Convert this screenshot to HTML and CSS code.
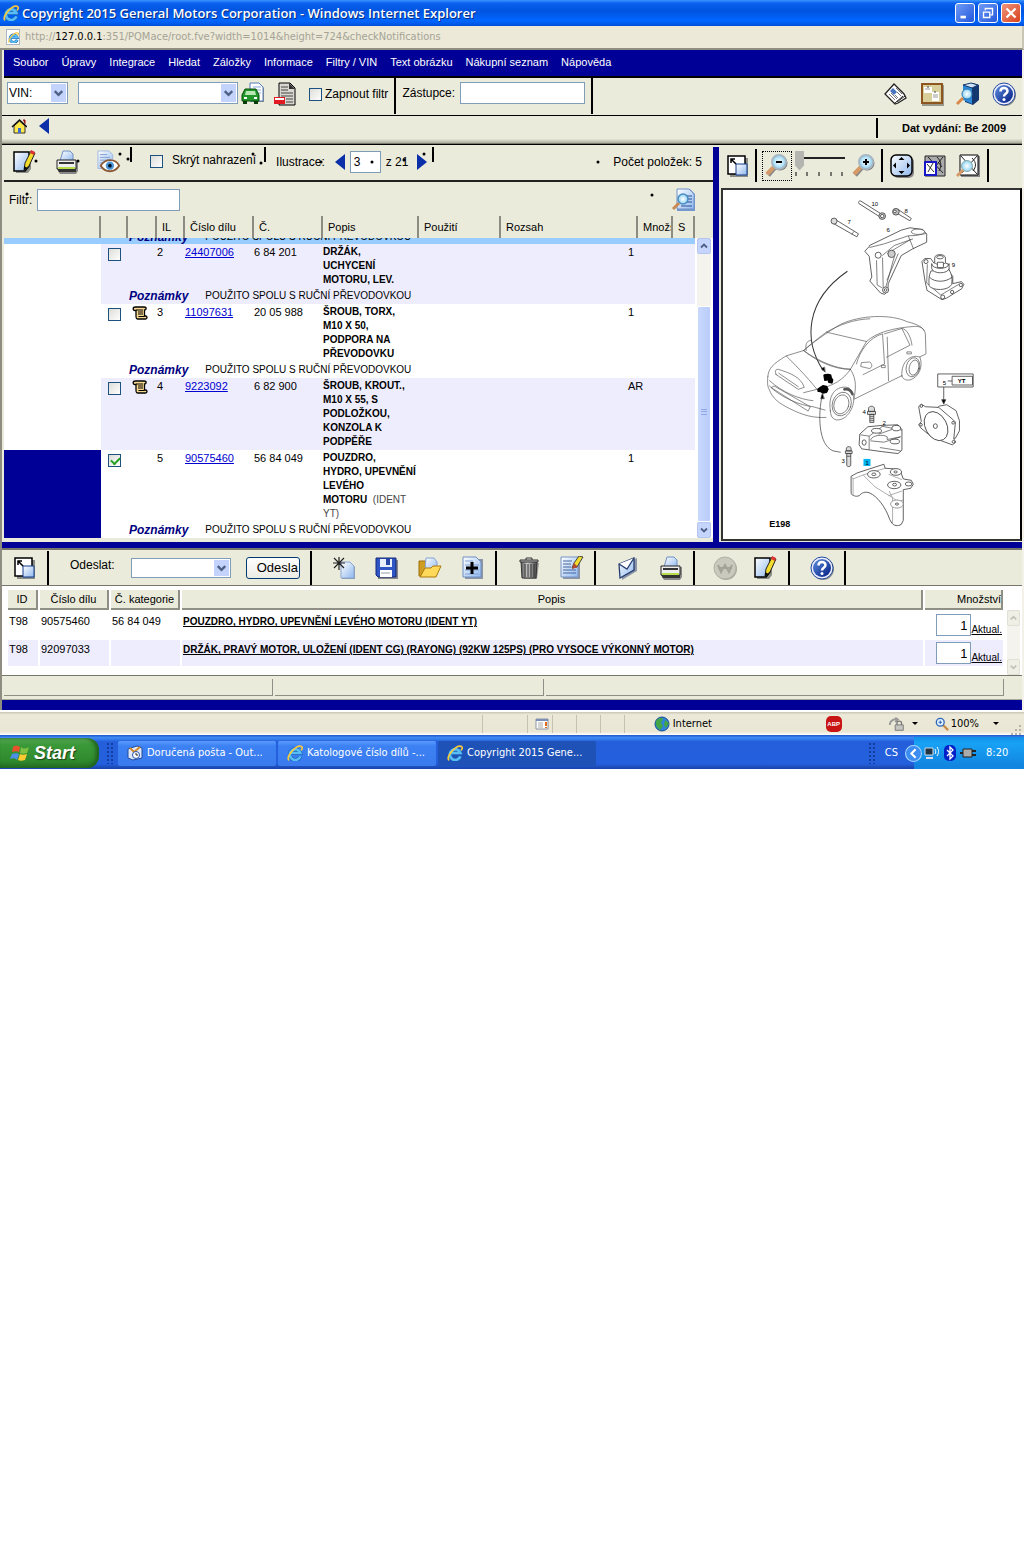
FILE: index.html
```html
<!DOCTYPE html>
<html lang="cs">
<head>
<meta charset="utf-8">
<title>Copyright 2015 General Motors Corporation - Windows Internet Explorer</title>
<link rel="stylesheet" href="styles.css">
</head>
<body>
<svg class="sprite" aria-hidden="true">
  <defs>
    <linearGradient id="sky" x1="0" y1="0" x2="1" y2="1"><stop offset="0" stop-color="#fff"/><stop offset="1" stop-color="#8fb8ee"/></linearGradient>
    <radialGradient id="lens"><stop offset="0" stop-color="#fff"/><stop offset="1" stop-color="#8ed2f2"/></radialGradient>
    <linearGradient id="globe" x1="0" y1="0" x2="1" y2="1"><stop offset="0" stop-color="#5f8fe0"/><stop offset="1" stop-color="#001c80"/></linearGradient>
    <linearGradient id="metal"><stop offset="0" stop-color="#555"/><stop offset=".4" stop-color="#ccc"/><stop offset="1" stop-color="#444"/></linearGradient>
    <symbol id="ie" viewBox="0 0 24 24"><path d="M20 17a8 8 0 1 1 0-5H7" fill="none" stroke="#1d62b8" stroke-width="6"/><path d="M20 17a8 8 0 1 1 0-5H7" fill="none" stroke="#58bdf5" stroke-width="4"/><path d="M3 23C-2 18 13 0 21 2c3 1 2 4 0 6" fill="none" stroke="#f7c93e" stroke-width="2.500"/></symbol>
    <symbol id="car" viewBox="0 0 24 24"><path d="M10 2h9l4 4v14H10z" fill="#8b8d88"/><path d="M9 1h9l4 4v14H9z" fill="#fff" stroke="#557db5"/><path d="M12 5h8M12 8h8M12 11h8" stroke="#88a9d8"/><path d="M4 7h11l3 6v6H1v-6z" fill="#22962a" stroke="#064d0a"/><path d="M5 9h9l1 4H4z" fill="#b8e7b4"/><path d="M2 19h4v3H2zM13 19h4v3h-4z" fill="#073b08"/><path d="M3 16h3M13 16h3" stroke="#fff" stroke-width="2"/></symbol>
    <symbol id="reddoc" viewBox="0 0 24 24"><path d="M6 1h11l5 5v17H6z" fill="#d8d8d0" stroke="#000"/><path d="M16 1v6h6z" fill="#333"/><path d="M8 5h7M8 8h7M8 11h12M8 14h12M13 17h7M13 20h7" stroke="#444"/><path d="M1 15h11v7H1z" fill="#e31b23"/><path d="M2 16h9v2H2z" fill="#fff"/></symbol>
    <symbol id="news" viewBox="0 0 24 24"><path d="M10 2 1 12l10 10 3-1 8-5-2-4z" fill="#fff" stroke="#222" stroke-width="1.300"/><path d="m13 20 8-6M11 21l8-7" fill="none" stroke="#222"/><path d="m9 6 4 4-3 3-4-4z" fill="#4773be"/><path d="m5 12 6 6M7 11l6 6M11 13l3 3M12 6l6 6M13 10l4 4" stroke="#777"/></symbol>
    <symbol id="board" viewBox="0 0 24 24"><path d="M2 3h22v21H2z" fill="#9a978b"/><path d="M2 2h20v19H2z" fill="#d8cf9a" stroke="#8d5520" stroke-width="2"/><path d="M4 5h8v6H4zM12 10h7v9h-7z" fill="#fff"/><path d="M5 7h5M13 13h5M13 15h5" stroke="#999"/><path d="M8 4v2M15 9v2" stroke="#444"/></symbol>
    <symbol id="book" viewBox="0 0 24 24"><path d="m9 4 8-3 6 2v15l-6 5-8-3z" fill="#12386f"/><path d="m7 3 9 3v16l-9-4z" fill="#2e8ad4"/><path d="m7 3 8-2 7 2-6 3z" fill="#cfe3f5" stroke="#12386f"/><circle cx="11" cy="12" r="5" fill="url(#lens)" stroke="#2876b4"/><path d="m7 16-6 6" stroke="#d9884a" stroke-width="3"/></symbol>
    <symbol id="help" viewBox="0 0 24 24"><circle cx="13" cy="13" r="11" fill="#8b8d88"/><circle cx="12" cy="12" r="11" fill="#eef" stroke="#214a9c"/><circle cx="12" cy="12" r="9" fill="url(#globe)"/><path d="M8.500 9.500c0-5 7-4.500 7-.5 0 3-3.500 2.500-3.500 5.500" fill="none" stroke="#fff" stroke-width="2.500"/><circle cx="12" cy="17.500" r="1.500" fill="#fff"/></symbol>
    <symbol id="home" viewBox="0 0 16 16"><path d="M3 8v7h11V8L8.500 3z" fill="#ffe84a" stroke="#333"/><path d="M1 9l7.500-7L16 9" fill="none" stroke="#111" stroke-width="1.500"/><path d="M7 10h3v5H7z" fill="#3a6ad0"/><path d="M12 2h2v4" fill="#911" stroke="#911"/></symbol>
    <symbol id="left" viewBox="0 0 12 16"><path d="M11 0v16L1 8z" fill="#0a2fa8"/></symbol>
    <symbol id="right" viewBox="0 0 12 16"><path d="M1 0v16l10-8z" fill="#0a2fa8"/></symbol>
    <symbol id="edit" viewBox="0 0 24 24"><path d="M3 4h15v15l-3 4H3z" fill="#8b8d88"/><path d="M1 2h15v14l-4 5H1z" fill="url(#sky)" stroke="#000" stroke-width="1.500"/><path d="m11 20 1-7 6-12 4 2-6 13z" fill="#f2dc2c" stroke="#222"/><path d="m17 3 4 2 1-3-4-2z" fill="#d33"/><path d="m11 20 .5-4 2.500 2z" fill="#000"/></symbol>
    <symbol id="print" viewBox="0 0 24 24"><path d="M5 11 8 1h7l3 3v8z" fill="url(#sky)" stroke="#6f8fc2"/><path d="M3 11h20v10l-2 3H5l-2-3z" fill="#888"/><path d="M2 10h19v9H2z" fill="#eee" stroke="#222"/><path d="M4 12h15v2H4z" fill="#333"/><path d="M3 17h17v2H3z" fill="#b7dc4c"/><path d="M2 19h19v3H4z" fill="#333"/></symbol>
    <symbol id="eye" viewBox="0 0 26 24"><path d="M1 0h12l4 4v15H1z" fill="url(#sky)" stroke="#9cb5df"/><path d="M3 4h8M3 7h11M3 10h11M3 13h6" stroke="#7d9bd0"/><path d="M4 16c5-8 16-8 20 0-5 8-15 8-20 0z" fill="#fff" stroke="#8a5a35" stroke-width="2"/><circle cx="14" cy="16" r="4.500" fill="#4d95d7"/><circle cx="14" cy="16" r="2" fill="#012"/></symbol>
    <symbol id="finddoc" viewBox="0 0 24 24"><path d="M5 1h13l5 5v17H5z" fill="#7698ce"/><path d="M5 1h12l5 5v15H5z" fill="url(#sky)" stroke="#6e90c9"/><path d="M15 8h5M15 11h5M15 14h5M9 18h11" stroke="#264e96"/><circle cx="11" cy="11" r="5" fill="url(#lens)" stroke="#4a8cc0" stroke-width="1.500"/><path d="m7 15-6 6" stroke="#c78954" stroke-width="3"/></symbol>
    <symbol id="scroll" viewBox="0 0 16 16"><path d="M3.500 2H12c3 0 2.500 3 .5 3v6h1c2 0 2 3 0 3H6c-2 0-2-1-2-3V5.500H3C.5 5.500.5 2 3.500 2z" fill="#f8d890" stroke="#000" stroke-width="1.300"/><path d="M4 5h7M6 7h5M6 9h5M6.500 11.500h6" stroke="#000"/></symbol>
    <symbol id="expand" viewBox="0 0 24 24"><path d="M4 4h18v19H4z" fill="#8b8d88"/><path d="M2 2h17v18H2z" fill="#fff" stroke="#000" stroke-width="1.500"/><path d="M10 10h11v11H10z" fill="url(#sky)" stroke="#123a8c"/><path d="M5 9V5h4M5 5l5 5" fill="none" stroke="#000" stroke-width="1.500"/></symbol>
    <symbol id="zoomout" viewBox="0 0 24 24"><path d="m10 13-7 8" stroke="#888" stroke-width="5"/><path d="m10 12-8 8" stroke="#d69a68" stroke-width="4"/><circle cx="15" cy="9" r="7.500" fill="#777"/><circle cx="14" cy="8" r="7" fill="url(#lens)" stroke="#a7b8c4" stroke-width="2"/><path d="M11 8h6" stroke="#000" stroke-width="2"/></symbol>
    <symbol id="zoomin" viewBox="0 0 24 24"><use href="#zoomout"/><path d="M14 5v6" stroke="#000" stroke-width="2"/></symbol>
    <symbol id="pan" viewBox="0 0 24 24"><rect x="3" y="3" width="21" height="21" rx="5" fill="#888"/><rect x="1" y="1" width="21" height="21" rx="5" fill="url(#sky)" stroke="#000" stroke-width="1.500"/><path d="m11.500 3 3 3h-6zM11.500 20l3-3h-6zM3 11.500l3-3v6zM20 11.500l-3-3v6z" fill="#000"/></symbol>
    <symbol id="region" viewBox="0 0 24 24"><path d="M2 2h20v20H2z" fill="#aaa" stroke="#222"/><path d="m5 3 15 16M20 3 8 18M14 3c4 4 5 8 2 14M15 8l4 5" stroke="#222" fill="none"/><path d="M2 8h11v13H2z" fill="#fff" stroke="#1717c8" stroke-width="2"/><path d="m4 10 7 8M10 9l-5 9" stroke="#333"/></symbol>
    <symbol id="whole" viewBox="0 0 24 24"><path d="M5 2h19v21H5z" fill="#888"/><path d="M4 1h18v20H4z" fill="#fff" stroke="#000"/><path d="m5 2 16 18M21 2 6 19M16 4c5 5 4 9 1 13" stroke="#222" fill="none"/><circle cx="11" cy="12" r="5.500" fill="url(#lens)" stroke="#8aa"/><path d="m7 16-6 6" stroke="#d69a68" stroke-width="3"/></symbol>
    <symbol id="newdoc" viewBox="0 0 24 24"><path d="M10 7h9l4 4v12H10z" fill="#909aa8"/><path d="M9 6h9l4 4v12H9z" fill="url(#sky)" stroke="#8aa6d4"/><path d="M7 1v13M1 7h12M2 2l10 10M12 2 2 12" stroke="#222" stroke-width="1.200"/></symbol>
    <symbol id="save" viewBox="0 0 24 24"><path d="M3 4h20v19H3z" fill="#888"/><path d="M1 2h20v19H3l-2-2z" fill="#2f55c4" stroke="#14297a"/><path d="M5 3h12v8H5z" fill="#e8effc"/><path d="M11 3h4v6h-4z" fill="#2746a8"/><path d="M5 14h12v7H5z" fill="#fff"/><path d="M6 17h9" stroke="#99a"/></symbol>
    <symbol id="folder" viewBox="0 0 24 24"><path d="M1 5h7l2 2h8v13H1z" fill="#cf9d22" stroke="#9d6f0b"/><path d="M8 2h8l3 4v9H7z" fill="url(#sky)" stroke="#84a2d3"/><path d="m2 21 5-9h6l2-2h8l-5 11z" fill="#ffd95a" stroke="#ab7b0d"/></symbol>
    <symbol id="adddoc" viewBox="0 0 24 24"><path d="M4 3h18v20H4z" fill="#8b95a5"/><path d="M2 1h13l5 5v15H2z" fill="url(#sky)" stroke="#6f8fc2"/><path d="M4 5h8M4 9h14M4 14h14M4 18h14" stroke="#83a0d2"/><path d="M11 6v12M5 12h12" stroke="#000" stroke-width="3"/></symbol>
    <symbol id="trash" viewBox="0 0 24 24"><path d="M6 7h16l-2 16H7z" fill="#999"/><path d="M4 5h16l-1 17H5z" fill="url(#metal)" stroke="#333"/><path d="M8 8v13M11 8v13M14 8v13M17 8v13" stroke="#333"/><path d="M3 4h18v2H3z" fill="#bbb" stroke="#333"/><path d="M9 4V2h6v2" fill="none" stroke="#333"/></symbol>
    <symbol id="erase" viewBox="0 0 24 24"><path d="M3 3h17v20H3z" fill="#8b95a5"/><path d="M1 1h17v20H1z" fill="url(#sky)" stroke="#7693c4"/><path d="M3 5h9M3 8h8M3 11h8M3 14h13M3 17h13" stroke="#45659f"/><path d="m12 12 2-5 5-7 4 1-6 10z" fill="#f0dc2c" stroke="#444"/><path d="m12 13 2-6 4 4z" fill="#b64733"/></symbol>
    <symbol id="mail" viewBox="0 0 24 24"><path d="m5 9 16-7v13L6 24z" fill="#8b95a5"/><path d="m3 8 15-6v12L4 22z" fill="url(#sky)" stroke="#263d70" stroke-width="1.300"/><path d="m3 8 8 5 7-11" fill="#fff" stroke="#263d70" stroke-width="1.300"/></symbol>
    <symbol id="world" viewBox="0 0 24 24"><circle cx="13" cy="13" r="11" fill="#a9a99e"/><circle cx="12" cy="12" r="11" fill="#c9c9bd" stroke="#b0b0a4"/><path d="m5 9 3 7 4-7 4 7 3-7M5 12h14" fill="none" stroke="#a3a397" stroke-width="2"/></symbol>
    <symbol id="chev" viewBox="0 0 16 16"><path d="m4 6 4 4 4-4" fill="none" stroke="#4d6185" stroke-width="2.500"/></symbol>
    <symbol id="chevup" viewBox="0 0 16 16"><path d="m4 10 4-4 4 4" fill="none" stroke="currentColor" stroke-width="2.500"/></symbol>
    <symbol id="earth" viewBox="0 0 16 16"><circle cx="8" cy="8" r="7" fill="#2d84d8" stroke="#1a4f95"/><path d="M2 5c3-4 6-3 7-2L7 7l2 3-3 4C3 12 1 8 2 5zM11 4l4 3-3 5-2-3z" fill="#43a548"/></symbol>
    <symbol id="flag" viewBox="0 0 20 20"><path d="M3 4c3-2 5-1 7 0L9 9C7 8 5 8 2 9z" fill="#e9502c"/><path d="M11 4c2 2 5 2 8 0l-2 6c-3 1-5 1-7 0z" fill="#7fc241"/><path d="M2 11c3-1 5-1 7 0l-2 6c-2-2-4-2-7-1z" fill="#4b8fe8"/><path d="M10 11c2 1 4 1 7 0l-2 6c-3 1-5 1-7 0z" fill="#fbcb2f"/></symbol>
    <symbol id="outlook" viewBox="0 0 16 16"><path d="m1 4 9-3 5 2v10l-9 2-5-2z" fill="#dfe9fb" stroke="#234a9a"/><path d="m3 3 4 4 6-5" fill="none" stroke="#d58b27" stroke-width="2"/><circle cx="9" cy="10" r="3.500" fill="#fff" stroke="#2450ad"/><path d="M9 8v2h2" fill="none" stroke="#222"/></symbol>
    <symbol id="glass" viewBox="0 0 16 16"><path d="m9 9 6 6" stroke="#c98b46" stroke-width="2.500"/><circle cx="6" cy="6" r="4.500" fill="#dff1ff" stroke="#2d66b5" stroke-width="1.500"/><path d="M6 4v4M4 6h4" stroke="#2058b0"/></symbol>
    <symbol id="lock" viewBox="0 0 20 16"><path d="M2 9c0-5 5-7 8-6M8 1l3 2-3 3" fill="none" stroke="#999" stroke-width="2"/><path d="M10 9V7c0-3 5-3 5 0v2" fill="none" stroke="#777" stroke-width="1.500"/><path d="M8 9h9v6H8z" fill="#c4c4c0" stroke="#777"/></symbol>
  </defs>
</svg>

<div class="window">
  <header class="titlebar">
    <svg class="i16"><use href="#ie"/></svg>
    <h1>Copyright 2015 General Motors Corporation - Windows Internet Explorer</h1>
    <button class="caption" aria-label="Minimalizovat"><svg viewBox="0 0 20 20"><path d="M5 14.500h6" stroke="#fff" stroke-width="3"/></svg></button>
    <button class="caption" aria-label="Obnovit"><svg viewBox="0 0 20 20"><path d="M7 7V5h8v7h-2M5 9h7v6H5z" fill="none" stroke="#fff" stroke-width="1.500"/></svg></button>
    <button class="caption close" aria-label="Zavřít"><svg viewBox="0 0 20 20"><path d="m5 5 10 10M15 5 5 15" stroke="#fff" stroke-width="2.500"/></svg></button>
  </header>
  <div class="address"><span class="page-icon"><svg><use href="#ie"/></svg></span><p>http://<b>127.0.0.1</b>:351/PQMace/root.fve?width=1014&amp;height=724&amp;checkNotifications</p></div>

  <div class="app">
    <nav class="menu">
      <a href="#">Soubor</a><a href="#">Úpravy</a><a href="#">Integrace</a><a href="#">Hledat</a><a href="#">Záložky</a><a href="#">Informace</a><a href="#">Filtry / VIN</a><a href="#">Text obrázku</a><a href="#">Nákupní seznam</a><a href="#">Nápověda</a>
    </nav>
    <div class="vinbar">
      <span class="combo vin-type"><select aria-label="Typ"><option>VIN:</option></select><svg><use href="#chev"/></svg></span>
      <span class="combo vin-value"><select aria-label="VIN"><option></option></select><svg><use href="#chev"/></svg></span>
      <button class="tool" aria-label="Vozidlo"><svg><use href="#car"/></svg></button>
      <button class="tool" aria-label="Zrušit vozidlo"><svg><use href="#reddoc"/></svg></button>
      <label class="check"><input type="checkbox"><span>Zapnout filtr</span></label>
      <i class="sep"></i>
      <label class="field"><span>Zástupce:</span><input type="text" class="deputy"></label>
      <i class="sep"></i>
      <div class="vin-tools">
        <button class="tool" aria-label="Novinky"><svg><use href="#news"/></svg></button>
        <button class="tool" aria-label="Nástěnka"><svg><use href="#board"/></svg></button>
        <button class="tool" aria-label="Katalog"><svg><use href="#book"/></svg></button>
        <button class="tool" aria-label="Nápověda"><svg><use href="#help"/></svg></button>
      </div>
    </div>
    <div class="crumbs">
      <button class="mini" aria-label="Domů"><svg class="i16"><use href="#home"/></svg></button>
      <button class="mini" aria-label="Zpět"><svg class="arrow"><use href="#left"/></svg></button>
      <p class="issue">Dat vydání: Be 2009</p>
    </div>

    <main class="split">
      <section class="parts">
        <svg class="dots" viewBox="0 0 693 70" aria-hidden="true"><g fill="#000"><circle cx="32" cy="14" r="1.500"/><circle cx="74" cy="14" r="1.500"/><circle cx="116" cy="7" r="1.500"/><circle cx="124" cy="12" r="1.500"/><circle cx="249" cy="7" r="1.500"/><circle cx="257" cy="16" r="1.500"/><circle cx="317" cy="15" r="1.500"/><circle cx="368" cy="15" r="1.500"/><circle cx="400" cy="13" r="1.500"/><circle cx="420" cy="7" r="1.500"/><circle cx="594" cy="15" r="1.500"/><circle cx="23" cy="47" r="1.500"/><circle cx="648" cy="48" r="1.500"/></g></svg>
        <div class="parts-tools">
          <button class="tool" aria-label="Poznámka"><svg><use href="#edit"/></svg></button>
          <button class="tool" aria-label="Tisk"><svg><use href="#print"/></svg></button>
          <button class="tool" aria-label="Náhled"><svg><use href="#eye"/></svg></button>
          <i class="tick"></i>
          <label class="check hide"><input type="checkbox"><span>Skrýt nahrazení</span></label>
          <i class="tick"></i>
          <label class="field illus" for="pageno"><span>Ilustrace:</span></label>
          <button class="mini" aria-label="Předchozí"><svg class="arrow"><use href="#left"/></svg></button>
          <input type="text" class="pageno" id="pageno" value="3">
          <span class="of">z 21</span>
          <button class="mini" aria-label="Další"><svg class="arrow"><use href="#right"/></svg></button>
          <i class="tick last"></i>
          <span class="count">Počet položek: 5</span>
        </div>
        <div class="filter">
          <label class="field"><span>Filtr:</span><input type="text" class="filter-box"></label>
          <button class="tool" aria-label="Hledat"><svg><use href="#finddoc"/></svg></button>
        </div>
        <div class="list">
          <table class="grid">
            <colgroup><col class="w97"><col class="w27"><col class="w29"><col class="w28"><col class="w69"><col class="w69"><col class="w96"><col class="w82"><col><col class="w10"><col class="w35"><col class="w22"></colgroup>
            <thead><tr><th></th><th></th><th></th><th>IL</th><th>Číslo dílu</th><th>Č.</th><th>Popis</th><th>Použití</th><th colspan="2">Rozsah</th><th>Množs</th><th>S</th></tr></thead>
            <tbody>
              <tr class="cut"><td colspan="12"><div class="note"><b>Poznámky</b><span>POUŽITO SPOLU S RUČNÍ PŘEVODOVKOU</span></div></td></tr>
              <tr class="alt"><td class="mark" rowspan="2"></td><td><input type="checkbox" aria-label="Položka 2"></td><td></td><td>2</td><td><a href="#">24407006</a></td><td>6 84 201</td><td class="name">DRŽÁK, UCHYCENÍ MOTORU, LEV.</td><td></td><td></td><td colspan="2">1</td><td></td></tr>
              <tr class="alt"><td colspan="11"><div class="note"><b>Poznámky</b><span>POUŽITO SPOLU S RUČNÍ PŘEVODOVKOU</span></div></td></tr>
              <tr><td class="mark" rowspan="2"></td><td><input type="checkbox" aria-label="Položka 3"></td><td><svg class="scrollicon"><use href="#scroll"/></svg></td><td>3</td><td><a href="#">11097631</a></td><td>20 05 988</td><td class="name">ŠROUB, TORX,<br>M10 X 50,<br>PODPORA NA PŘEVODOVKU</td><td></td><td></td><td colspan="2">1</td><td></td></tr>
              <tr><td colspan="11"><div class="note"><b>Poznámky</b><span>POUŽITO SPOLU S RUČNÍ PŘEVODOVKOU</span></div></td></tr>
              <tr class="alt"><td class="mark"></td><td><input type="checkbox" aria-label="Položka 4"></td><td><svg class="scrollicon"><use href="#scroll"/></svg></td><td>4</td><td><a href="#">9223092</a></td><td>6 82 900</td><td class="name">ŠROUB, KROUT.,<br>M10 X 55, S<br>PODLOŽKOU,<br>KONZOLA K<br>PODPĚŘE</td><td></td><td></td><td colspan="2">AR</td><td></td></tr>
              <tr><td class="mark chosen" rowspan="2"></td><td><input type="checkbox" checked aria-label="Položka 5"></td><td></td><td>5</td><td><a href="#">90575460</a></td><td>56 84 049</td><td class="name">POUZDRO,<br>HYDRO, UPEVNĚNÍ<br>LEVÉHO<br>MOTORU &nbsp;<span>(IDENT<br>YT)</span></td><td></td><td></td><td colspan="2">1</td><td></td></tr>
              <tr><td colspan="11"><div class="note"><b>Poznámky</b><span>POUŽITO SPOLU S RUČNÍ PŘEVODOVKOU</span></div></td></tr>
            </tbody>
          </table>
          <div class="scroller"><button aria-label="Nahoru"><svg><use href="#chevup"/></svg></button><i class="thumb"></i><button aria-label="Dolů"><svg><use href="#chev"/></svg></button></div>
        </div>
      </section>

      <section class="picture">
        <div class="picture-tools">
          <button class="tool" aria-label="Zvětšit okno"><svg><use href="#expand"/></svg></button>
          <i class="sep"></i>
          <button class="tool focus" aria-label="Oddálit"><svg><use href="#zoomout"/></svg></button>
          <span class="slider"><input type="range" min="0" max="4" value="0" aria-label="Měřítko"><svg viewBox="0 0 50 4"><path d="M1 0v4M12 0v4M24 0v4M36 0v4M47 0v4" stroke="#000"/></svg></span>
          <button class="tool" aria-label="Přiblížit"><svg><use href="#zoomin"/></svg></button>
          <i class="sep"></i>
          <button class="tool" aria-label="Posun"><svg><use href="#pan"/></svg></button>
          <button class="tool" aria-label="Výřez"><svg><use href="#region"/></svg></button>
          <button class="tool" aria-label="Celý obrázek"><svg><use href="#whole"/></svg></button>
          <i class="sep"></i>
        </div>
        <div class="canvas">
          <svg viewBox="723 190 296 348" role="img" aria-label="E198">
            <g transform="translate(716 140) scale(.33333)" fill="#fff" stroke="#444" stroke-width="2.500" stroke-linejoin="round">
              <path d="m428 191 60 38 5-8-60-38c-6-2-9 4-5 8z"/><circle cx="497" cy="228" r="10" fill="#ccc"/><circle cx="497" cy="228" r="5"/>
              <path d="m546 209 38 26-4 7-38-22z"/><circle cx="538" cy="215" r="10" fill="#bbb"/><circle cx="535" cy="214" r="4"/>
              <path d="m358 239 68 42-5 9-70-40z"/><circle cx="353" cy="243" r="9" fill="#ddd"/><path d="m412 274-6 9" stroke-width="2"/>
              <path d="m459 316 95-46 26-7 38 5 12 14v24l-42 20-34 20-39 84-1 22-10 10-12-4-32-36 6-12-8-62-13-15 14-15z"/>
              <path d="m459 322 44-11 72-24 22-1 32-6M497 346l36-30 56-20M512 340l70-42M480 360l2 74 14 8M498 352l2 92M533 350l-26 94M545 340l-34 80M575 287l16 40" fill="none" stroke-width="2"/>
              <ellipse cx="604" cy="275" rx="20" ry="8" stroke-width="2"/><circle cx="485" cy="345" r="9"/><circle cx="525" cy="341" r="11" fill="#ccc"/><circle cx="507" cy="449" r="9"/><circle cx="507" cy="449" r="4"/>
              <path d="m616 364 8-9h18l10 14 14-8 28 10 4 25 10 12v22l26-6 7 8-6 13-45 28-14 5-45-28-6-28z"/>
              <path d="m632 372-2 56 42 36 54-32" fill="none" stroke-width="2"/><path d="M643 392c-8 16-6 32-6 44 10 16 58 16 68-4 2-20 0-30-8-44z"/><path d="M638 410c15 18 52 16 68 0" fill="none"/><path d="M645 370c0 18 50 20 52 0v14c-2 18-50 18-52 0z"/><path d="M654 353c0-13 32-13 32 0v14c-4 8-28 8-32 0z"/><ellipse cx="670" cy="351" rx="10" ry="5"/><path d="M662 366h18v16h-18z"/><circle cx="628" cy="364" r="6"/><circle cx="678" cy="470" r="6"/><circle cx="706" cy="455" r="5"/><circle cx="732" cy="434" r="5"/>
            </g>
            <path d="M847 271C805 300 803 340 823 370" fill="none" stroke="#333"/>
            <g transform="translate(716 300) scale(.33333)" fill="none" stroke="#555" stroke-width="2" stroke-linejoin="round" stroke-linecap="round">
              <path d="M155 228c2-25 15-38 55-62l52-16c30-25 60-48 110-78 58-28 150-32 200-8 35 8 52 20 54 36l2 60-20 10M155 228c-2 24 0 30 4 38 10 28 30 42 62 58 40 20 70 28 108 26"/>
              <path d="M262 150c30 26 90 58 140 56M262 150c22-20 45-38 68-55l120 28-48 83c-40-2-90-20-140-56zM330 95c40-22 80-38 130-40M450 123c30-28 80-40 140-45 20-2 30 6 32 12M402 206c-20 30-50 50-100 60l-40 10M180 222l66 44 18-6c-10-30-40-42-78-54-10 0-10 8-6 16zM188 218l58 40"/>
              <path d="M160 240c40 36 90 56 130 60M160 256c30 32 90 58 130 62l36 10M210 166c20 20 60 60 92 100M402 206c20 30 16 60 10 90l146-72M420 190c10-40 40-80 78-90l6 90-64 32M504 100l52-16 24 50-70 36M556 84c16 0 28 30 30 50M512 110l4 130M270 150c-4-16 0-30 14-30M436 186l24-2c8 8 8 14 0 20l-26-6z"/>
              <path d="m166 260 8-4 108 62-6 12z"/>
              <path d="M342 330c-10-60 30-78 56-68 20 16 20 60-12 88-26 16-44 6-44-20z" fill="#fff"/><ellipse cx="376" cy="310" rx="28" ry="36" transform="rotate(18 376 310)"/><ellipse cx="375" cy="311" rx="22" ry="29" transform="rotate(18 375 311)"/>
              <path d="M556 226c-4-46 30-66 54-56 10 30-4 60-30 68-14 2-22-4-24-12z" fill="#fff"/><ellipse cx="589" cy="200" rx="20" ry="29" transform="rotate(14 589 200)"/><ellipse cx="592" cy="201" rx="14" ry="23" transform="rotate(14 592 201)"/><path d="M572 154h12v6h-12zM496 194h10v7h-10z"/>
              <path d="m324 224 10-2 8 2 2 8 4 6-2 8-8-2-2-8-10 2zM306 266l8-6 6-4 10 2 4 8-4 8-10 2-6-4-8-1z" fill="#000" stroke="#000" stroke-width="6"/><path d="M384 266c12-2 20 4 24 14" stroke="#555" stroke-width="8"/>
              <path d="M318 282c-14 60-12 150 32 168l22 4" stroke="#333"/><path d="m318 278-5 16h10zM326 214l-12-10 10-4z" fill="#000"/>
            </g>
            <g transform="translate(716 300) scale(.33333)" fill="#fff" stroke="#444" stroke-width="2.500" stroke-linejoin="round">
              <path d="M663 220h106v39H663zM706 227h61v26h-61zM693 241h13M681 259v42"/><path d="m681 310-6-13h12z" fill="#000"/>
              <path d="m650 330 18-14 22-4 28 18 10 30v30l-12 22-40 6z"/><path d="m606 318 8-8 12 8 40 2 42 36 8 8-5 50 6 10-10 8-60-22-34-28-7-10 8-10z"/><ellipse cx="658" cy="376" rx="32" ry="46" transform="rotate(-28 658 376)"/><ellipse cx="656" cy="376" rx="6" ry="7"/><circle cx="614" cy="316" r="4"/><circle cx="613" cy="372" r="4"/><circle cx="709" cy="366" r="4"/><circle cx="710" cy="423" r="4"/>
              <path d="M456 324c0-10 18-10 18 0v8h-18zM453 332h24v9h-24zM460 341h12v24h-12z" fill="#ddd"/><path d="M460 347h12M460 353h12M460 359h12" stroke-width="2"/>
              <path d="M390 442c0-6 14-6 14 0v8h-14zM387 450h20v8h-20zM391 458h12v36c-2 4-10 4-12 0z" fill="#ddd"/><path d="M391 466h12"/>
              <path d="m430 400 24-22 40-4 50-2 12 14v62l-12 10-50-6-58-8-8-12z"/><path d="m432 402 26 4v40M458 406l38-28M486 400l58-20M462 418c4-16 40-18 50-10v8l40-8M462 420l40 4 50-16M556 388l-62-12M490 440l62 10" fill="none" stroke-width="2"/><ellipse cx="480" cy="390" rx="15" ry="7"/><ellipse cx="539" cy="382" rx="13" ry="8"/><ellipse cx="535" cy="422" rx="14" ry="7"/><ellipse cx="443" cy="425" rx="6" ry="8"/>
              <path d="m404 526 18-10 80-26 4 12 28 2 18 8 8 22 24 4 6 12-8 12-22 4v92l-6 12c-10 6-22 4-28-4l-6-10c-14-40-38-70-60-80-16-6-24 0-32 8-10 4-18 0-24-6z"/>
              <path d="m404 526 6 8 30-12 36 36 52 32v76M410 534v50M516 584l40-14M516 520l40 16M440 522l66-20M518 570c10 30 30 34 44 26" fill="none" stroke="#888" stroke-width="2"/><ellipse cx="472" cy="520" rx="19" ry="11"/><ellipse cx="472" cy="520" rx="6" ry="4"/><ellipse cx="538" cy="513" rx="17" ry="10"/><ellipse cx="537" cy="513" rx="5" ry="3"/><ellipse cx="533" cy="552" rx="20" ry="11"/><ellipse cx="534" cy="551" rx="6" ry="4"/><ellipse cx="576" cy="549" rx="10" ry="6"/><ellipse cx="541" cy="609" rx="19" ry="12" stroke="#888"/><ellipse cx="541" cy="609" rx="5" ry="3"/>
            </g>
            <path d="M863 458h7v7h-7z" fill="#00b4f0"/>
            <g class="callouts"><text x="871" y="206">10</text><text x="904" y="213">8</text><text x="847" y="224">7</text><text x="886" y="232">6</text><text x="951" y="267">9</text><text x="942" y="384">5</text><text x="957" y="382" class="strong">YT</text><text x="862" y="413">4</text><text x="882" y="424">2</text><text x="841" y="462">3</text><text x="865" y="464">1</text></g>
            <text x="769" y="526" class="code">E198</text>
          </svg>
        </div>
      </section>
    </main>

    <section class="basket">
      <div class="basket-tools">
        <button class="tool" aria-label="Zvětšit okno"><svg><use href="#expand"/></svg></button>
        <i class="sep"></i>
        <label class="field send" for="target"><span>Odeslat:</span></label>
        <span class="combo target"><select id="target"><option></option></select><svg><use href="#chev"/></svg></span>
        <button class="push">Odesla</button>
        <i class="sep"></i>
        <div class="group">
          <button class="tool" aria-label="Nový"><svg><use href="#newdoc"/></svg></button>
          <button class="tool" aria-label="Uložit"><svg><use href="#save"/></svg></button>
          <button class="tool" aria-label="Otevřít"><svg><use href="#folder"/></svg></button>
          <button class="tool" aria-label="Přidat"><svg><use href="#adddoc"/></svg></button>
        </div>
        <i class="sep"></i>
        <div class="group"><button class="tool" aria-label="Odstranit"><svg><use href="#trash"/></svg></button><button class="tool" aria-label="Vymazat"><svg><use href="#erase"/></svg></button></div>
        <i class="sep"></i>
        <div class="group"><button class="tool" aria-label="Pošta"><svg><use href="#mail"/></svg></button><button class="tool" aria-label="Tisk"><svg><use href="#print"/></svg></button></div>
        <i class="sep"></i>
        <div class="group near"><button class="tool" aria-label="Web"><svg><use href="#world"/></svg></button><button class="tool" aria-label="Poznámka"><svg><use href="#edit"/></svg></button></div>
        <i class="sep"></i>
        <div class="group"><button class="tool" aria-label="Nápověda"><svg><use href="#help"/></svg></button></div>
        <i class="sep"></i>
      </div>
      <div class="basket-body">
        <table class="order">
          <colgroup><col class="w30"><col class="w69"><col class="w69"><col><col class="w78"></colgroup>
          <thead><tr><th>ID</th><th>Číslo dílu</th><th>Č. kategorie</th><th>Popis</th><th class="qty-head">Množství</th></tr></thead>
          <tbody>
            <tr><td>T98</td><td>90575460</td><td>56 84 049</td><td><a href="#">POUZDRO, HYDRO, UPEVNĚNÍ LEVÉHO MOTORU (IDENT YT)</a></td><td class="qty"><div><input type="text" value="1" aria-label="Množství 90575460"><a href="#">Aktual.</a></div></td></tr>
            <tr class="alt"><td>T98</td><td>92097033</td><td></td><td><a href="#">DRŽÁK, PRAVÝ MOTOR, ULOŽENÍ (IDENT CG) (RAYONG) (92KW 125PS) (PRO VYSOCE VÝKONNÝ MOTOR)</a></td><td class="qty"><div><input type="text" value="1" aria-label="Množství 92097033"><a href="#">Aktual.</a></div></td></tr>
          </tbody>
        </table>
        <div class="scroller off"><button aria-label="Nahoru" disabled><svg><use href="#chevup"/></svg></button><button aria-label="Dolů" disabled><svg class="flip"><use href="#chevup"/></svg></button></div>
      </div>
      <div class="basket-status"><span></span><span></span><span class="wide"></span></div>
    </section>
    <div class="navy-foot"></div>
  </div>

  <footer class="iestatus">
    <span class="slot grow"></span><span class="slot s45"></span><span class="slot s25"><svg viewBox="0 0 14 12"><path d="M1 1h12v10H1z" fill="#fff" stroke="#8a94a4"/><path d="M1 2h12" stroke="#7d8fb2" stroke-width="2"/><path d="M3 5h5M3 7h5M3 9h5" stroke="#aaa"/><path d="M11 4v4M11 9v1" stroke="#e36a1b" stroke-width="2"/></svg></span><span class="slot s24"></span><span class="slot s24"></span><span class="slot s24"></span>
    <span class="zone"><svg class="i16"><use href="#earth"/></svg>Internet</span>
    <span class="abp">ABP</span>
    <span class="ctl"><svg class="lock"><use href="#lock"/></svg><i class="caret"></i></span>
    <span class="ctl zoomctl"><svg class="small"><use href="#glass"/></svg><span>100%</span><i class="caret"></i></span>
    <svg class="grip" viewBox="0 0 12 12"><path d="M10 2v2M6 6v2M10 6v2M2 10v2M6 10v2M10 10v2" stroke="#b8b4a2" stroke-width="2"/></svg>
  </footer>
</div>

<div class="taskbar">
  <button class="start"><svg><use href="#flag"/></svg>Start</button>
  <i class="dotgrip"></i>
  <button class="task"><svg><use href="#outlook"/></svg><span>Doručená pošta - Out...</span></button>
  <button class="task"><svg><use href="#ie"/></svg><span>Katologové číslo dílů -...</span></button>
  <button class="task active"><svg><use href="#ie"/></svg><span>Copyright 2015 Gene...</span></button>
  <i class="dotgrip push-right"></i>
  <span class="lang">CS</span>
  <div class="tray">
    <button class="unfold" aria-label="Zobrazit skryté ikony"><svg viewBox="0 0 16 16"><circle cx="8" cy="8" r="7.500" fill="#3c8cf2" stroke="#a9d6ff"/><path d="M10 4 6 8l4 4" fill="none" stroke="#fff" stroke-width="2"/></svg></button>
    <svg class="i16" viewBox="0 0 16 16"><path d="M1 3h8v7H1z" fill="#234" stroke="#cde"/><path d="M2 13h7" stroke="#dde" stroke-width="2"/><path d="M11 4c1 2 1 4 0 5M13 2c2 3 2 6 0 9" fill="none" stroke="#fff"/></svg>
    <svg class="i16" viewBox="0 0 16 16"><rect x="2" width="12" height="16" rx="5" fill="#0020c8"/><path d="m5 5 6 6-3 3V2l3 3-6 6" fill="none" stroke="#fff" stroke-width="1.300"/></svg>
    <svg class="i16" viewBox="0 0 16 16"><path d="M3 4h9v8H3z" fill="#aaa" stroke="#222"/><path d="M0 8h3M12 6h4M12 10h4" stroke="#222" stroke-width="2"/></svg>
    <span class="clock">8:20</span>
  </div>
</div>
</body>
</html>
```
FILE: styles.css
```css
* { box-sizing: border-box; }
body { margin: 0; background: #fff; font: 12px/14px "Liberation Sans", Arial, sans-serif; color: #000; }
button { border: 0; padding: 0; background: none; font: inherit; color: inherit; }
h1, p { margin: 0; }
i { display: block; }
svg { display: block; flex: none; }
input, select { font: inherit; color: inherit; margin: 0; border-radius: 0; }
input[type="text"] { border: 1px solid #7f9db9; background: #fff; height: 22px; padding: 0 3px; }
input[type="checkbox"] { appearance: none; flex: none; display: block; width: 13px; height: 13px; border: 1px solid #1c5180; background: linear-gradient(135deg, #dcdcd7, #fff); }
input[type="checkbox"]:checked::before { content: ""; display: block; width: 7px; height: 4px; margin: 2px 0 0 2px; border: solid #21a121; border-width: 0 0 2px 2px; transform: rotate(-45deg); }
.sprite { position: absolute; width: 0; height: 0; }
.i16 { width: 16px; height: 16px; }

/* window frame */
.titlebar { display: flex; align-items: center; gap: 3px; height: 26px; padding: 0 3px; background: linear-gradient(#3c95ff, #0a62ee 12%, #0054e0 40%, #0066ff 80%, #0050d8); color: #fff; }
.titlebar h1 { flex: 1; font: 600 13px/16px "Open Sans", "Noto Sans", sans-serif; white-space: nowrap; text-shadow: 1px 1px #0a2d80; }
.caption { width: 20px; height: 20px; border: 1px solid #fff; border-radius: 3px; background: linear-gradient(135deg, #6f9bf5, #2257dc); }
.caption svg { width: 18px; height: 18px; }
.caption.close { background: linear-gradient(135deg, #f0957a, #d8401c); }
.address { display: flex; align-items: center; gap: 5px; height: 24px; padding: 0 6px; background: #ece9d8; border-bottom: 2px solid #8f8d82; border-right: 2px solid #c9c5b4; color: #a5a396; font: 11px/14px "DejaVu Sans Condensed", "DejaVu Sans", sans-serif; }
.address b { font-weight: normal; color: #000; }
.page-icon { width: 14px; height: 16px; padding: 2px 1px; background: #fff; border: 1px solid #a9b7c9; }
.page-icon svg { width: 11px; height: 11px; }
.app { border-left: 2px solid #8f8d82; border-right: 2px solid #f4f2e8; background: #ebebdb; }

/* top bars */
.menu { display: flex; gap: 13px; height: 28px; padding: 5px 8px 0 9px; margin-left: 2px; background: #000096; border-bottom: 2px solid #000; font-size: 11px; }
.menu a { color: #fff; text-decoration: none; white-space: nowrap; }
.combo { position: relative; display: block; height: 22px; }
.combo select { appearance: none; display: block; width: 100%; height: 100%; padding: 0 20px 0 1px; border: 1px solid #7f9db9; background: #fff; }
.combo svg { position: absolute; right: 2px; top: 2px; width: 15px; height: calc(100% - 4px); background: #c3d3fb; pointer-events: none; }
.tool { flex: none; display: block; width: 24px; height: 24px; }
.tool svg { width: 24px; height: 24px; }
.sep { flex: none; width: 2px; background: #000; align-self: stretch; }
.check, .field { display: flex; align-items: center; white-space: nowrap; }
.vinbar { display: flex; height: 38px; padding: 0 6px 1px 5px; border-bottom: 1px solid #000; }
.vinbar > .combo, .vinbar > .tool, .vinbar > .check, .vin-tools { margin-top: 4px; }
.vin-type { width: 61px; margin-right: 10px; }
.vin-value { width: 160px; margin-right: 3px; }
.vinbar > .tool { margin-right: 8px; }
.vinbar .check { gap: 3px; height: 24px; margin-right: 6px; padding-left: 4px; }
.vinbar .field { gap: 5px; height: 22px; margin: 4px 6px 0; }
.deputy { width: 125px; }
.vin-tools { display: flex; gap: 12px; margin-left: auto; }
.crumbs { display: flex; align-items: flex-start; gap: 11px; height: 29px; padding: 2px 16px 0 9px; background: linear-gradient(#ebebdb 78%, #a9a99a 94%, #000 97%); }
.mini svg.arrow { width: 12px; height: 16px; }
.issue { margin-left: auto; padding: 3px 0 3px 24px; border-left: 2px solid #000; font-weight: bold; font-size: 11px; }

/* parts list */
.split { display: flex; padding-top: 2px; background: #ebebdb; border-bottom: 6px solid #000096; }
.parts { position: relative; flex: 1; min-width: 0; padding-left: 2px; }
.dots { position: absolute; left: 2px; top: 0; width: 693px; height: 70px; pointer-events: none; z-index: 1; }
.parts-tools { display: flex; align-items: center; height: 35px; padding: 0 11px 3px 9px; border-bottom: 2px solid #222; }
.parts-tools .tool { margin-right: 18px; }
.tick { width: 2px; height: 15px; background: #000; align-self: flex-start; margin-left: -9px; }
.hide { gap: 9px; margin-left: 18px; padding-bottom: 5px; }
.hide input { margin-top: 4px; }
.hide + .tick { margin-left: 8px; }
.illus { margin: 0 9px 0 10px; }
.pageno { width: 31px; margin: 0 5px 0 4px; }
.of { margin-right: 8px; }
.tick.last { margin-left: 4px; }
.count { margin-left: auto; }
.filter { display: flex; align-items: center; justify-content: space-between; height: 34px; padding: 2px 17px 0 5px; }
.filter .field { gap: 5px; }
.filter-box { width: 143px; }
.list { display: flex; background: linear-gradient(#ebebdb 22px, #fff 22px); padding-right: 2px; }
.grid { flex: 1; width: 100%; table-layout: fixed; border-spacing: 0; font-size: 11px; }
.w10 { width: 10px; } .w22 { width: 22px; } .w27 { width: 27px; } .w28 { width: 28px; } .w29 { width: 29px; } .w30 { width: 30px; }
.w35 { width: 35px; } .w69 { width: 69px; } .w78 { width: 78px; } .w82 { width: 82px; } .w96 { width: 96px; } .w97 { width: 97px; }
.grid th { height: 22px; padding: 0 0 0 5px; font-weight: normal; text-align: left; white-space: nowrap; overflow: hidden; background: #ebebdb; border-right: 2px solid #8c8c82; }
.grid td { padding: 1px 0; vertical-align: top; }
.grid td[colspan="11"] { padding-bottom: 0; }
.grid td input { margin: 3px 0 0 7px; }
.grid .alt { background: #eeedfd; }
.grid .mark { background: #fff; }
.grid .mark.chosen { background: #000096; }
.grid a { color: #0000d0; }
.name { font-weight: bold; font-size: 10px; white-space: nowrap; }
.grid .alt:nth-child(2) .name { white-space: normal; padding-right: 10px; }
.grid tr:nth-child(4) .name { white-space: normal; }
.name span { font-weight: normal; color: #444; }
.note { display: flex; gap: 17px; height: 15px; padding-left: 28px; white-space: nowrap; font-size: 10px; }
.note b { font-size: 12px; font-style: italic; color: #000080; }
.cut { background: #9cf; }
.grid .cut td { padding: 0; }
.cut .note { height: 6px; overflow: hidden; align-items: flex-end; padding-left: 125px; }
.scrollicon { width: 16px; height: 16px; margin: 0 0 0 4px; }
.scroller { display: flex; flex-direction: column; justify-content: space-between; width: 14px; margin: 22px 0 0 2px; background: #f4f3ee; color: #4d6185; }
.scroller button { height: 16px; border: 1px solid #b5c7f0; border-radius: 2px; background: #c6d5fd; }
.scroller svg { width: 12px; height: 14px; }
.thumb { flex: 1; margin-top: 52px; border: 1px solid #fff; border-radius: 2px; background: linear-gradient(#8fa8e8, #8fa8e8) center / 6px 1px no-repeat, linear-gradient(#8fa8e8, #8fa8e8) 50% 49% / 6px 1px no-repeat, linear-gradient(#8fa8e8, #8fa8e8) 50% 48% / 6px 1px no-repeat, linear-gradient(90deg, #c9d8fd, #b9cdfa); }

/* illustration */
.picture { display: flex; flex-direction: column; width: 309px; padding-left: 2px; border-left: 6px solid #000096; }
.picture-tools { display: flex; align-items: center; height: 41px; padding: 2px 5px 6px; gap: 5px; }
.focus { display: grid; place-items: center; width: 30px; height: 30px; border: 1px dotted #000; }
.slider { width: 52px; margin: 0 0 6px -2px; }
.slider svg { width: 50px; height: 4px; }
.slider input { appearance: none; display: block; width: 52px; height: 22px; background: linear-gradient(#222, #222) 0 7px / 50px 2px no-repeat; }
.slider input::-webkit-slider-thumb { appearance: none; width: 9px; height: 20px; background: #b4b4b0; clip-path: polygon(0 0, 100% 0, 100% 75%, 50% 100%, 0 75%); }
.picture-tools .sep ~ .sep ~ .tool { margin-right: 2px; margin-left: 2px; }
.canvas { flex: 1; background: #fff; border: 2px solid #333; border-right-color: #000; margin-bottom: 1px; }
.canvas svg { width: 100%; height: auto; }
.callouts { font-size: 6px; font-family: "Liberation Sans", sans-serif; }
.strong { font-weight: bold; }
.code { font: bold 9px "Liberation Sans", sans-serif; }

/* shopping list */
.basket { border-top: 2px solid #77756c; }
.basket-tools { display: flex; align-items: center; height: 36px; padding: 1px 0 0 11px; border-bottom: 1px solid #77756c; }
.basket-tools > .sep { margin: 0 0 0 10px; }
.send { margin-left: 21px; padding-bottom: 6px; }
.target { width: 100px; height: 20px; margin: 0 15px 0 16px; }
.push { width: 54px; height: 22px; padding-left: 10px; border: 1px solid #003c74; border-radius: 3px; background: linear-gradient(#fff, #ecebe5); font-size: 13px; overflow: hidden; white-space: nowrap; text-align: left; }
.group { display: flex; gap: 19px; padding-left: 20px; }
.near { gap: 17px; padding-left: 18px; }
.basket-body { display: flex; height: 89px; padding: 2px 2px 0 4px; background: #fff; }
.order { flex: 1; align-self: flex-start; width: 100%; table-layout: fixed; border-spacing: 2px; font-size: 11px; }
.order th { height: 20px; padding: 0; font-weight: normal; background: #ebebdb; border: solid #8f8f86; border-width: 0 2px 2px 0; white-space: nowrap; }
.order .qty-head { text-align: right; }
.order td { height: 26px; padding: 2px 1px; vertical-align: top; }
.order .alt td { background: #eeedfd; }
.order td a { color: #000; font-weight: bold; font-size: 10px; white-space: nowrap; }
.qty div { display: flex; align-items: flex-end; justify-content: flex-end; }
.qty input { width: 35px; font-size: 13px; text-align: right; }
.order .qty a { font-weight: normal; line-height: 12px; }
.scroller.off { width: 13px; color: #c3c1b6; }
.scroller.off button { background: #f0efe6; border-color: #e2e0d4; }
.scroller.off svg { width: 11px; }
.flip { transform: rotate(180deg); }
.basket-status { display: flex; gap: 2px; height: 25px; padding: 3px 18px 3px 2px; border-top: 1px solid #77756c; border-bottom: 1px solid #aaa89c; }
.basket-status span { flex: none; width: 269px; border: solid #8f8f86; border-width: 0 1px 1px 0; }
.basket-status .wide { flex: 1; }
.navy-foot { height: 10px; background: #000096; }

/* browser status */
.iestatus { display: flex; align-items: center; height: 25px; padding: 0 2px; border-top: 2px solid #fff; background: linear-gradient(#c8c5b5, #ece9d8 12%, #e9e6d4 85%, #fff); font: 11px/14px "DejaVu Sans Condensed", "DejaVu Sans", sans-serif; }
.slot { height: 18px; border-right: 1px solid #c5c2b0; }
.grow { flex: 1; }
.s45 { width: 45px; } .s24 { width: 24px; } .s25 { width: 25px; }
.slot svg { width: 14px; height: 12px; margin: 3px 0 0 7px; }
.zone { display: flex; align-items: center; gap: 3px; width: 201px; padding-left: 29px; }
.abp { width: 16px; height: 16px; border-radius: 5px; background: #c81414; color: #fff; font: bold 6px/16px "Liberation Sans", sans-serif; text-align: center; }
.ctl { display: flex; align-items: center; gap: 6px; margin-left: 46px; }
.zoomctl { margin-left: 17px; gap: 2px; }
.zoomctl .caret { margin-left: 12px; }
.lock { width: 18px; height: 16px; }
.small { width: 14px; height: 14px; }
.caret { border: 3px solid transparent; border-top-color: #000; border-bottom: 0; }
.grip { width: 12px; height: 12px; margin-left: 11px; align-self: flex-end; }

/* taskbar */
.taskbar { display: flex; align-items: center; gap: 2px; height: 34px; padding-top: 2px; background: linear-gradient(#1f55c8, #3f8cf5 8%, #245edb 20%, #2460dd 85%, #1941a5); color: #fff; font: 11px/14px "DejaVu Sans Condensed", "DejaVu Sans", sans-serif; }
.start { display: flex; align-items: center; gap: 4px; width: 99px; height: 30px; padding-left: 10px; border-radius: 0 12px 12px 0; background: linear-gradient(#5fae5c, #3c9a3a 20%, #2f8a2e 75%, #256e24); box-shadow: inset -3px 0 4px #1d5c1c; font: italic bold 18px/22px "Liberation Sans", sans-serif; text-shadow: 1px 1px 1px #1a4018; }
.start svg { width: 20px; height: 20px; }
.dotgrip { width: 8px; height: 22px; margin: 0 2px 0 5px; background: radial-gradient(circle, #123d9e 1px, transparent 1px) 0 0 / 4px 4px; }
.task { display: flex; align-items: center; gap: 4px; width: 158px; height: 25px; padding-left: 9px; border-radius: 2px; background: linear-gradient(#5a9bff, #3c81f3 20%, #3a7bee); white-space: nowrap; }
.task svg { width: 16px; height: 16px; }
.task.active { background: #1e52b7; }
.push-right { margin-left: auto; margin-right: 4px; }
.lang { padding: 0 14px 0 3px; }
.tray { display: flex; align-items: center; gap: 2px; align-self: stretch; width: 110px; background: linear-gradient(#1290e8, #18a2f5 20%, #1185e0 90%); }
.unfold { width: 17px; height: 17px; margin-left: -9px; }
.clock { margin-left: 8px; }
```
